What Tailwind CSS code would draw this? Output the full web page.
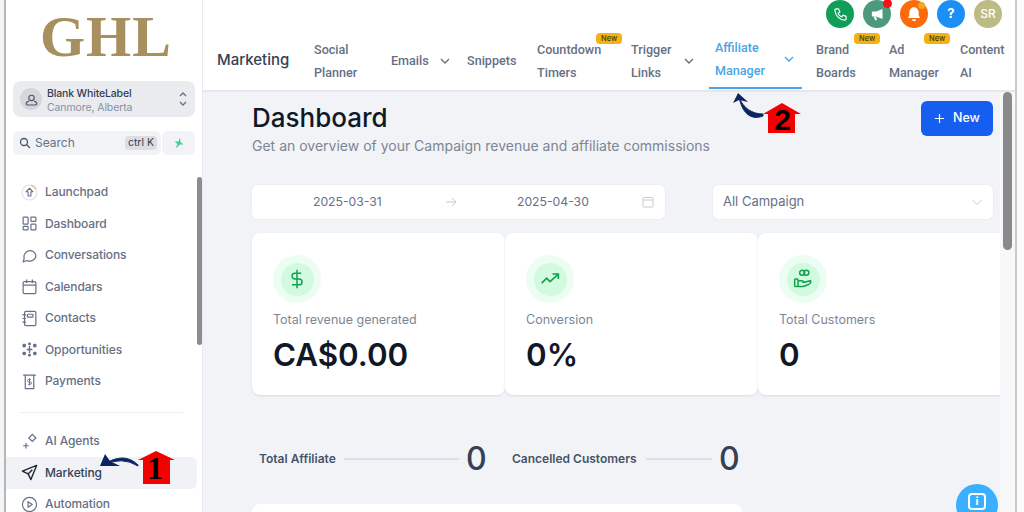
<!DOCTYPE html>
<html><head><meta charset="utf-8"><script src="https://cdn.jsdelivr.net/npm/@tailwindcss/browser@4"></script></head>
<body class="m-0">
<div class="relative flex w-[1024px] h-[512px] overflow-hidden bg-white font-['Inter',sans-serif]">
  <!-- window edge -->
  <div class="w-[6px] shrink-0 bg-[#f4f5f5] border-r-2 border-[#b5b6b8]"></div>
  <!-- sidebar -->
  <aside class="relative w-[197px] shrink-0 bg-white border-r border-[#e8eaee] overflow-hidden">
    <div class="h-[81px] pl-[34px] pt-[7px]">
      <span class="font-['Liberation_Serif',serif] font-bold text-[58px] leading-[60px] tracking-[1px] text-[#a78f5e]">GHL</span>
    </div>
    <div class="ml-[7px] w-[182px] h-[36px] rounded-lg bg-[#e9ebef] flex items-center pl-[7px] pr-[5px]">
      <div class="w-[22px] h-[22px] rounded-full bg-[#d4d6da] flex items-center justify-center">
        <svg class="w-[13px] h-[13px]" viewBox="0 0 24 24" fill="none" stroke="#475467" stroke-width="2"><circle cx="12" cy="9" r="5"/><path d="M7 15c-3 1-5 3-5 5 0 1 1 2 3 2h14c2 0 3-1 3-2 0-2-2-4-5-5"/></svg>
      </div>
      <div class="ml-[5px] flex-1 pt-[3px]">
        <div class="text-[10.5px] leading-[14px] font-medium text-[#344054] tracking-[-0.15px]">Blank WhiteLabel</div>
        <div class="text-[10.5px] leading-[13px] text-[#8a919e] tracking-[-0.1px]">Canmore, Alberta</div>
      </div>
      <svg class="w-[10px] h-[18px] mr-[2px]" viewBox="0 0 10 18" fill="none" stroke="#667085" stroke-width="1.3"><path d="M2 6l3-3 3 3M2 12l3 3 3-3"/></svg>
    </div>
    <div class="ml-[7px] mt-[14px] flex gap-[1px] h-[24px]">
      <div class="w-[148px] rounded-md bg-[#f1f3f6] flex items-center pl-[6px] pr-[4px]">
        <svg class="w-[12px] h-[12px]" viewBox="0 0 24 24" fill="none" stroke="#475467" stroke-width="2.6"><circle cx="10" cy="10" r="7"/><path d="M15.5 15.5L22 22"/></svg>
        <span class="ml-[4px] flex-1 text-[12px] text-[#667085]">Search</span>
        <span class="h-[14px] px-[3px] rounded-sm bg-[#dcdee2] text-[10.5px] leading-[14px] text-[#344054]">ctrl K</span>
      </div>
      <div class="w-[33px] rounded-md bg-[#f1f3f6] flex items-center justify-center">
        <svg class="w-[12px] h-[12px]" viewBox="0 0 24 24" fill="#3fcf8e"><path d="M14 1L11 9H3l6 5-4 9 9-8h7l-6-5z"/></svg>
      </div>
    </div>
    <nav class="mt-[21.5px] text-[12px] tracking-[-0.1px] font-medium text-[#667085]">
      <a class="flex items-center h-[31.5px] pl-[15px]">
        <svg class="w-[17px] h-[17px]" viewBox="0 0 24 24" fill="none"><circle cx="12" cy="12" r="10.5" stroke="#dfe1e5" stroke-width="1.5"/><path d="M14 1.8a10.5 10.5 0 0 1 7 5.5" stroke="#f2a65a" stroke-width="1.5"/><path d="M12 6l5 5h-3v6h-4v-6H7z" stroke="#667085" stroke-width="1.5" stroke-linejoin="round"/></svg>
        <span class="ml-[7px]">Launchpad</span></a>
      <a class="flex items-center h-[31.5px] pl-[15px]">
        <svg class="w-[17px] h-[17px]" viewBox="0 0 24 24" fill="none" stroke="#667085" stroke-width="1.7"><rect x="3" y="3" width="7" height="10" rx="1"/><rect x="14" y="3" width="7" height="6" rx="1"/><rect x="3" y="16" width="7" height="5" rx="1"/><rect x="14" y="13" width="7" height="8" rx="1"/></svg>
        <span class="ml-[7px]">Dashboard</span></a>
      <a class="flex items-center h-[31.5px] pl-[15px]">
        <svg class="w-[17px] h-[17px]" viewBox="0 0 24 24" fill="none" stroke="#667085" stroke-width="1.7"><path d="M21 11.5a8.5 8.5 0 0 1-12.5 7.5L3 21l1.5-5A8.5 8.5 0 1 1 21 11.5z" stroke-linejoin="round"/></svg>
        <span class="ml-[7px]">Conversations</span></a>
      <a class="flex items-center h-[31.5px] pl-[15px]">
        <svg class="w-[17px] h-[17px]" viewBox="0 0 24 24" fill="none" stroke="#667085" stroke-width="1.7"><rect x="3" y="5" width="18" height="17" rx="2"/><path d="M3 10h18M8 2v5M16 2v5"/></svg>
        <span class="ml-[7px]">Calendars</span></a>
      <a class="flex items-center h-[31.5px] pl-[15px]">
        <svg class="w-[17px] h-[17px]" viewBox="0 0 24 24" fill="none" stroke="#667085" stroke-width="1.7"><rect x="5" y="2" width="16" height="20" rx="2"/><rect x="9" y="6" width="8" height="4" rx="1"/><path d="M2 7h5M2 12h5M2 17h5"/></svg>
        <span class="ml-[7px]">Contacts</span></a>
      <a class="flex items-center h-[31.5px] pl-[15px]">
        <svg class="w-[17px] h-[17px]" viewBox="0 0 24 24" fill="#667085"><rect x="2" y="4" width="5" height="5" rx="2"/><rect x="10" y="2" width="4" height="4" rx="1.5"/><rect x="17" y="4" width="5" height="5" rx="2"/><rect x="2" y="15" width="5" height="5" rx="2"/><rect x="10" y="18" width="4" height="4" rx="1.5"/><rect x="17" y="15" width="5" height="5" rx="2"/><path d="M12 7v10M8 12h8" stroke="#667085" stroke-width="2"/></svg>
        <span class="ml-[7px]">Opportunities</span></a>
      <a class="flex items-center h-[31.5px] pl-[15px]">
        <svg class="w-[17px] h-[17px]" viewBox="0 0 24 24" fill="none" stroke="#667085" stroke-width="1.7"><path d="M3 3h18M6 3v19h12V3"/><path d="M14 9h-3a1.5 1.5 0 0 0 0 3.5h2a1.5 1.5 0 0 1 0 3.500h-3M12 7.500v10" stroke-width="1.3"/></svg>
        <span class="ml-[7px]">Payments</span></a>
      <div class="ml-[14px] mr-[14px] w-[163px] h-px bg-[#eceef1] mt-[14.5px] mb-[13px]"></div>
      <a class="flex items-center h-[31.5px] pl-[15px]">
        <svg class="w-[17px] h-[17px]" viewBox="0 0 24 24" fill="none" stroke="#667085" stroke-width="1.7"><path d="M16 2l5 5-5 5-5-5zM7 14v8M3 18h8"/></svg>
        <span class="ml-[7px]">AI Agents</span></a>
      <a class="flex items-center h-[31.5px] pl-[15px] mr-[5px] rounded-l-none rounded-r-md bg-[#f0f2f6] text-[#344054]">
        <svg class="w-[17px] h-[17px]" viewBox="0 0 24 24" fill="none" stroke="#1d2939" stroke-width="2" stroke-linejoin="round"><path d="M22 2L2 10l8 4 4 8zM10 14l6-6"/></svg>
        <span class="ml-[7px]">Marketing</span></a>
      <a class="flex items-center h-[31.5px] pl-[15px]">
        <svg class="w-[17px] h-[17px]" viewBox="0 0 24 24" fill="none" stroke="#667085" stroke-width="1.7"><circle cx="12" cy="12" r="10"/><path d="M10 8l6 4-6 4z" stroke-linejoin="round"/></svg>
        <span class="ml-[7px]">Automation</span></a>
    </nav>
    <div class="absolute left-[191px] top-[177px] w-[5px] h-[168px] rounded-full bg-[#8c8d8f]"></div>
  </aside>
  <!-- main -->
  <main class="flex-1 flex flex-col min-w-0 overflow-hidden">
    <header class="relative h-[92px] shrink-0 bg-white border-b-2 border-[#e5e7eb]">
      <div class="flex justify-end gap-[9px] pr-[22px] h-[28px]">
        <span class="w-[28px] h-[28px] rounded-full bg-[#0f9d58] flex items-center justify-center"><svg class="w-[15px] h-[15px]" viewBox="0 0 24 24" fill="none" stroke="#fff" stroke-width="1.8"><path d="M5 3h4l2 5-3 2a12 12 0 0 0 6 6l2-3 5 2v4a2 2 0 0 1-2 2A17 17 0 0 1 3 5a2 2 0 0 1 2-2z" stroke-linejoin="round"/></svg></span>
        <span class="relative w-[28px] h-[28px] rounded-full bg-[#4b9b7a] flex items-center justify-center"><svg class="w-[15px] h-[15px]" viewBox="0 0 24 24" fill="#fff"><path d="M20 3v16l-10-4H4a1 1 0 0 1-1-1V8a1 1 0 0 1 1-1h6z"/><path d="M6 15h4l1 6H8z"/></svg><span class="absolute -top-[1px] right-[-1px] w-[9px] h-[9px] rounded-full bg-[#f5101a]"></span></span>
        <span class="relative w-[28px] h-[28px] rounded-full bg-[#fb6b0b] flex items-center justify-center"><svg class="w-[16px] h-[16px]" viewBox="0 0 24 24" fill="#fff"><path d="M12 2a7 7 0 0 0-7 7v5l-2 4h18l-2-4V9a7 7 0 0 0-7-7z"/><path d="M9 20h6a3 3 0 0 1-6 0z"/></svg><span class="absolute top-[2px] right-[3px] w-[7px] h-[7px] rounded-full bg-[#f5a623]"></span></span>
        <span class="w-[28px] h-[28px] rounded-full bg-[#1b8ff5] flex items-center justify-center text-white text-[13px] font-bold">?</span>
        <span class="w-[28px] h-[28px] rounded-full bg-[#bdbb85] flex items-center justify-center text-white text-[12px] font-medium">SR</span>
      </div>
      <div class="absolute left-0 right-0 top-[33px] h-[55px] flex items-center font-['Roboto',sans-serif] text-[12.6px] leading-[23px] font-medium text-[#667085]">
        <span class="ml-[14px] w-[97px] pb-[2px] font-['Inter',sans-serif] text-[15px] text-[#344054]">Marketing</span>
        <span class="w-[77px]">Social<br>Planner</span>
        <span class="w-[76px] flex items-center"><span class="w-[42px]">Emails</span><svg class="ml-[6px] w-[12px] h-[12px]" viewBox="0 0 12 12" fill="none" stroke="#667085" stroke-width="1.4"><path d="M2 4l4 4 4-4"/></svg></span>
        <span class="w-[70px]">Snippets</span>
        <span class="relative w-[94px]">Countdown<br>Timers<em class="absolute -top-[5px] left-[59px] px-[5px] h-[11px] rounded-sm bg-[#f5b011] font-['Inter',sans-serif] text-[7.5px] leading-[11px] not-italic text-[#473a10]">New</em></span>
        <span class="w-[84px] flex items-center"><span class="w-[52px]">Trigger<br>Links</span><svg class="w-[12px] h-[12px]" viewBox="0 0 12 12" fill="none" stroke="#667085" stroke-width="1.4"><path d="M2 4l4 4 4-4"/></svg></span>
        <span class="relative h-[57px] w-[93px] ml-[-6px] mr-[14px] pl-[6px] pb-[1px] flex items-center text-[#4aa5e8] border-b-2 border-[#4aa5e8]"><span class="w-[68px]">Affiliate<br>Manager</span><svg class="w-[12px] h-[12px]" viewBox="0 0 12 12" fill="none" stroke="#4aa5e8" stroke-width="1.4"><path d="M2 4l4 4 4-4"/></svg></span>
        <span class="relative w-[73px]">Brand<br>Boards<em class="absolute -top-[5px] left-[38px] px-[5px] h-[11px] rounded-sm bg-[#f5b011] font-['Inter',sans-serif] text-[7.5px] leading-[11px] not-italic text-[#473a10]">New</em></span>
        <span class="relative w-[71px]">Ad<br>Manager<em class="absolute -top-[5px] left-[35px] px-[5px] h-[11px] rounded-sm bg-[#f5b011] font-['Inter',sans-serif] text-[7.5px] leading-[11px] not-italic text-[#473a10]">New</em></span>
        <span>Content<br>AI</span>
      </div>
    </header>
    <div class="flex-1 overflow-hidden bg-[#f1f3f7] pl-[49px] w-[797px]">
      <div class="flex justify-between items-start w-[741px]">
        <div class="pt-[10px]">
          <h1 class="text-[26px] leading-[31px] font-[450] text-[#101828]">Dashboard</h1>
          <p class="mt-[3px] text-[14px] leading-[20px] text-[#7d8694]">Get an overview of your Campaign revenue and affiliate commissions</p>
        </div>
        <button class="mt-[9px] w-[72px] h-[35px] rounded-md bg-[#155eef] text-white text-[12.5px] font-medium flex items-center justify-center gap-[8px]"><svg class="w-[11px] h-[11px]" viewBox="0 0 12 12" stroke="#fff" stroke-width="1.3"><path d="M6 1v10M1 6h10"/></svg>New</button>
      </div>
      <div class="mt-[29px] flex w-[741px] justify-between">
        <div class="w-[413px] h-[34px] rounded-md bg-white shadow-[0_0_0_1px_#eceef2] flex items-center text-[12.2px] text-[#667085]">
          <span class="ml-[61px] w-[132px]">2025-03-31</span>
          <svg class="w-[12px] h-[12px]" viewBox="0 0 12 12" fill="none" stroke="#c5c9d0" stroke-width="1"><path d="M1 6h10M7 2l4 4-4 4"/></svg>
          <span class="ml-[60px] w-[125px]">2025-04-30</span>
          <svg class="w-[12px] h-[12px]" viewBox="0 0 12 12" fill="none" stroke="#c5c9d0" stroke-width="1"><rect x="1" y="1.500" width="10" height="9.500" rx="1"/><path d="M1 4h10"/></svg>
        </div>
        <div class="w-[280px] h-[34px] rounded-md bg-white shadow-[0_0_0_1px_#eceef2] flex items-center justify-between px-[10px] text-[13px] text-[#667085]">
          <span>All Campaign</span>
          <svg class="w-[12px] h-[12px]" viewBox="0 0 12 12" fill="none" stroke="#c5c9d0" stroke-width="1"><path d="M1.500 4l4.500 4.500L10.500 4"/></svg>
        </div>
      </div>
      <div class="mt-[14px] flex w-[800px]">
        <div class="w-[253px] shrink-0 h-[162px] rounded-lg bg-white shadow-[0_1px_2px_#d9dce2] pl-[21px] pt-[22px]">
          <div class="w-[48px] h-[48px] rounded-full bg-[#ecfdf3] flex items-center justify-center"><div class="w-[33px] h-[33px] rounded-full bg-[#d1fadf] flex items-center justify-center"><svg class="w-[20px] h-[20px]" viewBox="0 0 24 24" fill="none" stroke="#12a150" stroke-width="1.800"><path d="M12 1v22M17 5H9.500a3.500 3.500 0 0 0 0 7h5a3.500 3.500 0 0 1 0 7H6"/></svg></div></div>
          <div class="mt-[7px] text-[12.5px] leading-[20px] text-[#7d8694]">Total revenue generated</div>
          <div class="mt-[4px] text-[31.3px] leading-[42px] font-semibold text-[#101828]">CA$0.00</div>
        </div>
        <div class="w-[253px] shrink-0 h-[162px] rounded-lg bg-white shadow-[0_1px_2px_#d9dce2] pl-[21px] pt-[22px]">
          <div class="w-[48px] h-[48px] rounded-full bg-[#ecfdf3] flex items-center justify-center"><div class="w-[33px] h-[33px] rounded-full bg-[#d1fadf] flex items-center justify-center"><svg class="w-[20px] h-[20px]" viewBox="0 0 24 24" fill="none" stroke="#12a150" stroke-width="2"><path d="M2 17l6-6 4 4 9-8M15 6h7v6"/></svg></div></div>
          <div class="mt-[7px] text-[12.5px] leading-[20px] text-[#7d8694]">Conversion</div>
          <div class="mt-[4px] text-[31.3px] leading-[42px] font-semibold text-[#101828]">0%</div>
        </div>
        <div class="w-[253px] shrink-0 h-[162px] rounded-lg bg-white shadow-[0_1px_2px_#d9dce2] pl-[21px] pt-[22px]">
          <div class="w-[48px] h-[48px] rounded-full bg-[#ecfdf3] flex items-center justify-center"><div class="w-[33px] h-[33px] rounded-full bg-[#d1fadf] flex items-center justify-center"><svg class="w-[20px] h-[20px]" viewBox="0 0 24 24" fill="none" stroke="#12a150" stroke-width="1.800"><circle cx="11" cy="4.500" r="3"/><circle cx="16" cy="4.500" r="3"/><rect x="2" y="12" width="4" height="9" rx="1"/><path d="M6 14h5l3 2h-3m3 0l7-2c1 2-1 4-3 5l-6 2H6"/></svg></div></div>
          <div class="mt-[7px] text-[12.5px] leading-[20px] text-[#7d8694]">Total Customers</div>
          <div class="mt-[4px] text-[31.3px] leading-[42px] font-semibold text-[#101828]">0</div>
        </div>
      </div>
      <div class="mt-[43px] ml-[7px] flex items-center h-[42px]">
        <span class="w-[85px] text-[12px] font-semibold text-[#475467]">Total Affiliate</span>
        <span class="w-[115px] h-[2px] bg-[#dde0e6]"></span>
        <span class="ml-[7px] w-[46px] text-[32px] font-medium text-[#344054]">0</span>
        <span class="w-[134px] text-[12px] font-semibold text-[#475467]">Cancelled Customers</span>
        <span class="w-[66px] h-[2px] bg-[#dde0e6]"></span>
        <span class="ml-[7px] text-[32px] font-medium text-[#344054]">0</span>
      </div>
      <div class="mt-[24px] w-[490px] h-[20px] rounded-t-lg bg-white"></div>
    </div>
  </main>
  <!-- right rail -->
  <div class="absolute left-[1000px] top-[92px] w-[15px] h-[420px] bg-[#f7f8fa]">
    <div class="absolute left-[3px] top-0 w-[9px] h-[158px] rounded-full bg-[#8a8a8a]"></div>
  </div>
  <div class="absolute left-[1015px] top-0 w-[9px] h-[512px] bg-[#fbfbfb] border-l-2 border-[#c9cacc]"></div>
  <!-- chat bubble -->
  <div class="absolute left-[956px] top-[484px] w-[42px] h-[42px] rounded-full bg-[#38b0ff] flex items-start justify-center pt-[9px]">
    <span class="w-[18px] h-[17px] rounded-sm border-2 border-white text-white text-[11px] leading-[13px] text-center font-bold">i</span>
  </div>
  <!-- annotation 1 -->
  <svg class="absolute left-[100px] top-[450px] w-[76px] h-[36px]" viewBox="100 450 76 36"><path d="M138 465Q124 451 103 465Q122 456 138 466z" fill="#0c2461" stroke="#0c2461" stroke-width="1"/><path d="M100 466L105 454L110 461L120 466z" fill="#0c2461"/><path d="M156 451L175 460H170V484H143V460H138z" fill="#f50000"/></svg>
  <span class="absolute left-[143px] top-[452px] w-[24px] text-center font-['Liberation_Serif',serif] font-bold text-[32px] leading-[32px] text-black">1</span>
  <!-- annotation 2 -->
  <svg class="absolute left-[730px] top-[90px] w-[76px] h-[46px]" viewBox="730 90 76 46"><path d="M763 116C750 121 742 112 739 97C743 108 752 114 763 114z" fill="#0c2461" stroke="#0c2461" stroke-width="1"/><path d="M738 93L733 103L739 100L748 102z" fill="#0c2461"/><path d="M782 103L801 114H795V133H768V114H763z" fill="#f50000"/></svg>
  <span class="absolute left-[770px] top-[104px] w-[25px] text-center font-['Liberation_Sans',sans-serif] font-bold text-[30px] leading-[32px] text-black">2</span>
</div>
</body></html>
